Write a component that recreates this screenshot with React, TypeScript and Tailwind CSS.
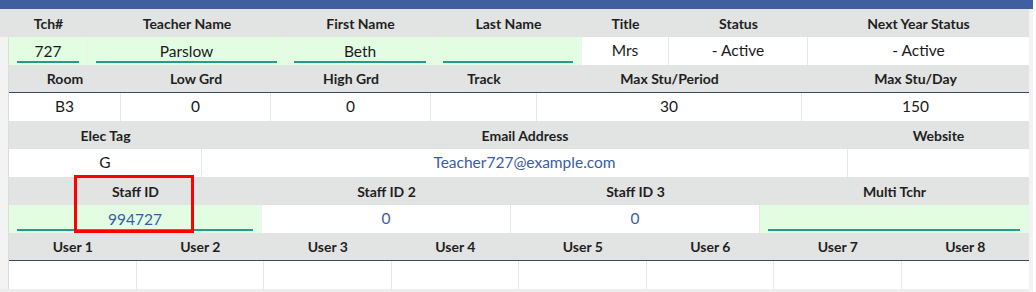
const head = "flex items-center justify-center text-[14px] font-bold text-[#1f1f1f]";
const cell = "flex items-center justify-center border-r border-[#e4e8ec] text-[15.5px] text-[#1a1a1a] last:border-r-0";

function Field({ value, blue }: { value: string; blue?: boolean }) {
  return (
    <div className="flex h-full items-end bg-[#e3fde3] pb-[2px] border-r border-[#eef2ee]">
      <div
        className={`mx-2 flex h-[20px] w-full items-center justify-center border-b-2 border-[#2a9a88] text-[15.5px] ${
          blue ? "text-[#3a5ca8]" : "text-[#1a1a1a]"
        }`}
      >
        {value}
      </div>
    </div>
  );
}

export default function App() {
  return (
    <div className="relative h-[292px] w-[1036px] overflow-hidden bg-white font-['Lato',sans-serif]">
      <div className="h-[9px] w-[1033px] bg-[#3f5fa0]" />
      <div className="flex">
        <div className="w-[1029px]">
          {/* top header */}
          <div className="grid h-[28px] grid-cols-[79px_198px_149px_147px_87px_139px_221px] bg-[#e2e3e3] pl-[9px]">
            <div className={head}>Tch#</div>
            <div className={head}>Teacher Name</div>
            <div className={head}>First Name</div>
            <div className={head}>Last Name</div>
            <div className={head}>Title</div>
            <div className={head}>Status</div>
            <div className={head}>Next Year Status</div>
          </div>

          <div className="flex">
            <div className="w-[9px] border-r border-[#dcdcdc] bg-[#f3f3f3]" />
            <div className="w-[1020px]">
              <div className="grid h-[28px] grid-cols-[79px_198px_149px_147px_87px_139px_221px]">
                <Field value="727" />
                <Field value="Parslow" />
                <Field value="Beth" />
                <Field value="" />
                <div className={cell}>Mrs</div>
                <div className={cell}>- Active</div>
                <div className={cell}>- Active</div>
              </div>

              <div className="grid h-[28px] grid-cols-[112px_150px_160px_106px_265px_227px] border-b border-[#3b4a5c] bg-[#e2e3e3]">
                <div className={head}>Room</div>
                <div className={head}>Low Grd</div>
                <div className={head}>High Grd</div>
                <div className={head}>Track</div>
                <div className={head}>Max Stu/Period</div>
                <div className={head}>Max Stu/Day</div>
              </div>
              <div className="grid h-[28px] grid-cols-[112px_150px_160px_106px_265px_227px]">
                <div className={cell}>B3</div>
                <div className={cell}>0</div>
                <div className={cell}>0</div>
                <div className={cell}></div>
                <div className={cell}>30</div>
                <div className={cell}>150</div>
              </div>

              <div className="grid h-[28px] grid-cols-[193px_646px_181px] bg-[#e2e3e3]">
                <div className={head}>Elec Tag</div>
                <div className={head}>Email Address</div>
                <div className={head}>Website</div>
              </div>
              <div className="grid h-[28px] grid-cols-[193px_646px_181px]">
                <div className={cell}>G</div>
                <div className={`${cell} text-[#3a5ca8]`}>Teacher727@example.com</div>
                <div className={cell}></div>
              </div>

              <div className="grid h-[28px] grid-cols-[253px_249px_249px_269px] bg-[#e2e3e3]">
                <div className={head}>Staff ID</div>
                <div className={head}>Staff ID 2</div>
                <div className={head}>Staff ID 3</div>
                <div className={head}>Multi Tchr</div>
              </div>
              <div className="grid h-[28px] grid-cols-[253px_249px_249px_269px]">
                <Field value="994727" blue />
                <div className={`${cell} text-[#3a5ca8]`}>0</div>
                <div className={`${cell} text-[#3a5ca8]`}>0</div>
                <Field value="" />
              </div>

              <div className="grid h-[28px] grid-cols-8 border-b border-[#3b4a5c] bg-[#e2e3e3]">
                {[1, 2, 3, 4, 5, 6, 7, 8].map((n) => (
                  <div key={n} className={head}>
                    User {n}
                  </div>
                ))}
              </div>
              <div className="grid h-[28px] grid-cols-8">
                {[1, 2, 3, 4, 5, 6, 7, 8].map((n) => (
                  <div key={n} className={cell}></div>
                ))}
              </div>
            </div>
          </div>
          <div className="h-[4px] bg-[#ededed]" />
        </div>
        <div className="w-[4px] bg-[#f3f3f3]" />
      </div>

      {/* highlight box */}
      <div className="pointer-events-none absolute left-[74px] top-[175px] h-[58px] w-[120px] border-[3px] border-[#ff0000]" />
    </div>
  );
}
